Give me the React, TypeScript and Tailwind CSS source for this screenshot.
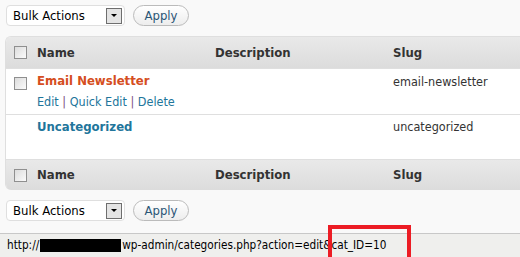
import React from "react";

const font = { fontFamily: '"DejaVu Sans Condensed", "DejaVu Sans", Tahoma, sans-serif' };

function Checkbox() {
  return (
    <div className="w-[13px] h-[13px] border border-[#8f8f8f] bg-gradient-to-br from-[#dcdcdc] to-[#fbfbfb]" />
  );
}

function BulkBar() {
  return (
    <div className="flex items-center pl-[6px] h-[21px]">
      <div className="flex items-center justify-between w-[119px] h-[21px] bg-white border border-[#dfdfdf] rounded-[4px] pl-[6px] pr-[2px]">
        <span className="text-[13px] text-black leading-none">Bulk Actions</span>
        <div className="w-[16px] h-[16px] border border-[#6e6e6e] bg-[#e4e4e4] flex items-center justify-center">
          <svg width="8" height="5" viewBox="0 0 8 5"><path d="M1 1h6L4 4z" fill="#000" /></svg>
        </div>
      </div>
      <div className="ml-[8px] w-[56px] h-[21px] rounded-full border border-[#bbbbbb] bg-gradient-to-b from-white to-[#ededed] flex items-center justify-center">
        <span className="text-[13px] text-[#2b5576] leading-none">Apply</span>
      </div>
    </div>
  );
}

function HeaderRow({ top }: { top?: boolean }) {
  return (
    <div className={`grid grid-cols-[26px_178px_178px_1fr] items-center h-[31px] bg-gradient-to-b from-[#e9e9e9] to-[#dcdcdc] ${top ? "" : "border-t border-[#dfdfdf]"}`}>
      <div className="pl-[8px]"><Checkbox /></div>
      <div className="pl-[5px] text-[13px] font-bold text-[#333]">Name</div>
      <div className="pl-[5px] text-[13px] font-bold text-[#333]">Description</div>
      <div className="pl-[5px] text-[13px] font-bold text-[#333]">Slug</div>
    </div>
  );
}

export default function App() {
  return (
    <div className="w-[520px] h-[257px] bg-[#f9f9f9] overflow-hidden flex flex-col" style={font}>
      <div className="pt-[5px]"><BulkBar /></div>
      <div className="mt-[10px] ml-[5px] w-[530px] border-l border-t border-[#dfdfdf] rounded-tl-[6px] rounded-bl-[6px] overflow-hidden">
        <HeaderRow top />
        <div className="grid grid-cols-[26px_178px_178px_1fr] h-[46px] bg-white border-t border-[#dfdfdf]">
          <div className="pl-[8px] pt-[8px]"><Checkbox /></div>
          <div className="pl-[5px] pt-[4px] flex flex-col">
            <span className="text-[13px] font-bold text-[#d54e21] leading-[16px]">Email Newsletter</span>
            <span className="text-[12.5px] text-[#21759b] leading-[15px] mt-[5px] whitespace-nowrap">
              Edit <span className="text-[#7b4b7f]">|</span> Quick Edit <span className="text-[#7b4b7f]">|</span> Delete
            </span>
          </div>
          <div />
          <div className="pl-[5px] pt-[5px] text-[12.5px] text-[#333] leading-[16px]">email-newsletter</div>
        </div>
        <div className="grid grid-cols-[26px_178px_178px_1fr] h-[45px] bg-white border-t border-[#dfdfdf]">
          <div />
          <div className="pl-[5px] pt-[4px] text-[13px] font-bold text-[#21759b] leading-[16px]">Uncategorized</div>
          <div />
          <div className="pl-[5px] pt-[4px] text-[12.5px] text-[#333] leading-[16px]">uncategorized</div>
        </div>
        <HeaderRow />
      </div>
      <div className="mt-[10px]"><BulkBar /></div>
      <div className="relative mt-[12px] flex-1 border-t border-[#c8c8c8] bg-[#efefed] flex items-center pl-[7px] text-[11.7px] text-black">
        <span>http://</span>
        <span className="inline-block w-[81px] h-[13px] bg-black mx-[1px]" />
        <span>wp-admin/categories.php?action=edit&amp;cat_ID=10</span>
        <div className="absolute left-[328px] top-[-9px] w-[83px] h-[40px] border-[4px] border-[#ec1c24]" />
      </div>
    </div>
  );
}
